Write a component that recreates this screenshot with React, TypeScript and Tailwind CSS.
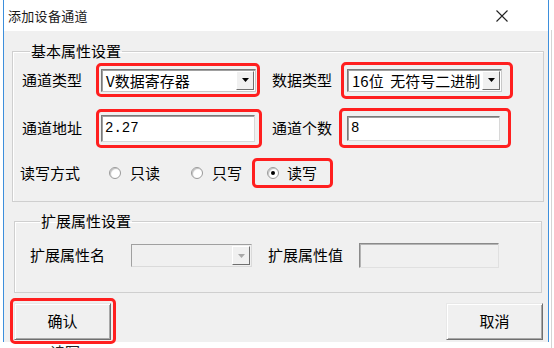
import React from "react";

// Windows-classic style "add device channel" dialog, with red annotation boxes

const font = "font-['Noto_Sans_CJK_SC',sans-serif]";

const Arrow = ({ disabled }: { disabled?: boolean }) => (
  <div className="w-[18px] h-[19px] mr-[1px] shrink-0 bg-[#f0f0f0] border border-t-white border-l-white border-r-[#6f6f6f] border-b-[#6f6f6f] flex items-center justify-center">
    <svg width="7" height="4" viewBox="0 0 7 4" aria-hidden="true">
      <path d="M0 0h7L3.5 4z" fill={disabled ? "#a8a8a8" : "#000"} />
    </svg>
  </div>
);

const Combo = ({ text, className }: { text: string; className: string }) => (
  <div className={`h-[23px] bg-white border border-[#7a7a7a] border-b-[#c8c8c8] border-r-[#c8c8c8] shadow-[inset_1px_1px_0_#a0a0a0] flex items-center overflow-hidden ${className}`}>
    <span className="flex-1 min-w-0 pl-[4px] whitespace-pre overflow-hidden text-[15px] leading-[21px]">{text}</span>
    <Arrow />
  </div>
);

const Field = ({ text, className }: { text: string; className: string }) => (
  <div className={`bg-white border border-[#7a7a7a] border-b-[#d8d8d8] border-r-[#d8d8d8] shadow-[inset_1px_1px_0_#a0a0a0] flex items-center ${className}`}>
    <span className="pl-[3px] text-[14px] font-['Liberation_Mono','Noto_Sans_CJK_SC',monospace]">{text}</span>
  </div>
);

const Radio = ({ checked }: { checked?: boolean }) => (
  <span className="w-[12px] h-[12px] rounded-full bg-white border border-[#9a9a9a] shadow-[inset_1px_1px_1px_#c0c0c0] flex items-center justify-center shrink-0">
    {checked && <span className="w-[4px] h-[4px] rounded-full bg-black" />}
  </span>
);

const Button = ({ label }: { label: string }) => (
  <button className="w-[97px] h-[37px] bg-[#f0f0f0] border border-t-[#e8e8e8] border-l-[#e8e8e8] border-r-[#6f6f6f] border-b-[#6f6f6f] shadow-[inset_1px_1px_0_#ffffff,inset_-1px_-1px_0_#a8a8a8] text-[15px] text-black">
    {label}
  </button>
);

export default function App() {
  return (
    <div className={`w-[554px] h-[348px] bg-white overflow-hidden flex text-black ${font}`}>
      <div className="ml-[3px] w-[546px] shrink-0 flex flex-col">
        <div className="border-l border-r border-[#3d8fdc]">
          {/* title bar */}
          <div className="h-[31px] bg-white flex items-center justify-between pl-[4px] pr-[40px]">
            <span className="text-[13px] tracking-[0.3px] text-[#1a1a1a]">添加设备通道</span>
            <svg width="12" height="12" viewBox="0 0 12 12" aria-hidden="true">
              <path d="M0.5 0.5l11 11M11.5 0.5l-11 11" stroke="#222" strokeWidth="1.1" />
            </svg>
          </div>

          {/* body */}
          <div className="h-[311px] bg-[#f0f0f0] flex flex-col">
            <fieldset className="ml-[8px] mt-[10px] w-[532px] border border-[#cfcfcf] shadow-[inset_1px_1px_0_#ffffff] pl-[9px] pb-[13px]">
              <legend className="ml-[8px] px-[1px] text-[15px] leading-[20px]">基本属性设置</legend>

              <div className="h-[38px] flex items-center">
                <span className="w-[74px] text-[15px]">通道类型</span>
                <div className="w-[164px] h-[34px] border-[3px] border-[#ff1f1f] rounded-[5px] flex items-center pl-[2px]">
                  <Combo text="V数据寄存器" className="w-[155px]" />
                </div>
                <span className="ml-[12px] w-[69px] text-[15px]">数据类型</span>
                <div className="w-[172px] h-[37px] border-[3px] border-[#ff1f1f] rounded-[5px] flex items-center pl-[3px]">
                  <Combo text="16位  无符号二进制" className="w-[155px]" />
                </div>
              </div>

              <div className="mt-[9px] h-[40px] flex items-center">
                <span className="w-[74px] text-[15px]">通道地址</span>
                <div className="w-[166px] h-[39px] border-[3px] border-[#ff1f1f] rounded-[5px] flex items-center pl-[2px]">
                  <Field text="2.27" className="w-[154px] h-[27px]" />
                </div>
                <span className="ml-[10px] w-[67px] text-[15px]">通道个数</span>
                <div className="w-[172px] h-[40px] border-[3px] border-[#ff1f1f] rounded-[5px] flex items-center pl-[5px]">
                  <Field text="8" className="w-[153px] h-[25px]" />
                </div>
              </div>

              <div className="mt-[10px] h-[30px] flex items-center -ml-[2px] text-[15px]">
                <span className="w-[89px]">读写方式</span>
                <Radio />
                <span className="ml-[9px]">只读</span>
                <span className="ml-[31px]"><Radio /></span>
                <span className="ml-[9px]">只写</span>
                <div className="ml-[10px] w-[81px] h-[30px] border-[3px] border-[#ff1f1f] rounded-[5px] flex items-center pl-[12px]">
                  <Radio checked />
                  <span className="ml-[8px]">读写</span>
                </div>
              </div>
            </fieldset>

            <fieldset className="ml-[10px] mt-[9px] w-[528px] border border-[#cfcfcf] shadow-[inset_1px_1px_0_#ffffff] pl-[15px] pb-[24px]">
              <legend className="ml-[10px] px-[1px] text-[15px] leading-[20px]">扩展属性设置</legend>
              <div className="mt-[12px] h-[25px] flex items-center text-[15px]">
                <span className="w-[101px]">扩展属性名</span>
                <div className="w-[121px] h-[23px] bg-[#f0f0f0] border border-[#a0a0a0] border-b-[#dadada] border-r-[#dadada] flex items-center justify-end">
                  <Arrow disabled />
                </div>
                <span className="ml-[16px] w-[91px]">扩展属性值</span>
                <div className="w-[140px] h-[25px] bg-[#f0f0f0] border border-[#8a8a8a] border-b-[#e0e0e0] border-r-[#e0e0e0] shadow-[inset_1px_1px_0_#b4b4b4]" />
              </div>
            </fieldset>

            <div className="mt-[5px] flex items-center justify-between">
              <div className="ml-[6px] w-[106px] h-[46px] border-[3px] border-[#ff1f1f] rounded-[5px] flex items-center pl-[1px]">
                <Button label="确认" />
              </div>
              <div className="mr-[5px]">
                <Button label="取消" />
              </div>
            </div>
          </div>
        </div>
        {/* text of the window behind, peeking out below */}
        <div className="pl-[47px] text-[15px] leading-[20px] text-[#222]">读写</div>
      </div>
      <div className="ml-[2px] mt-[30px] w-[1px] h-[318px] bg-[#d4d4d4]" />
    </div>
  );
}
